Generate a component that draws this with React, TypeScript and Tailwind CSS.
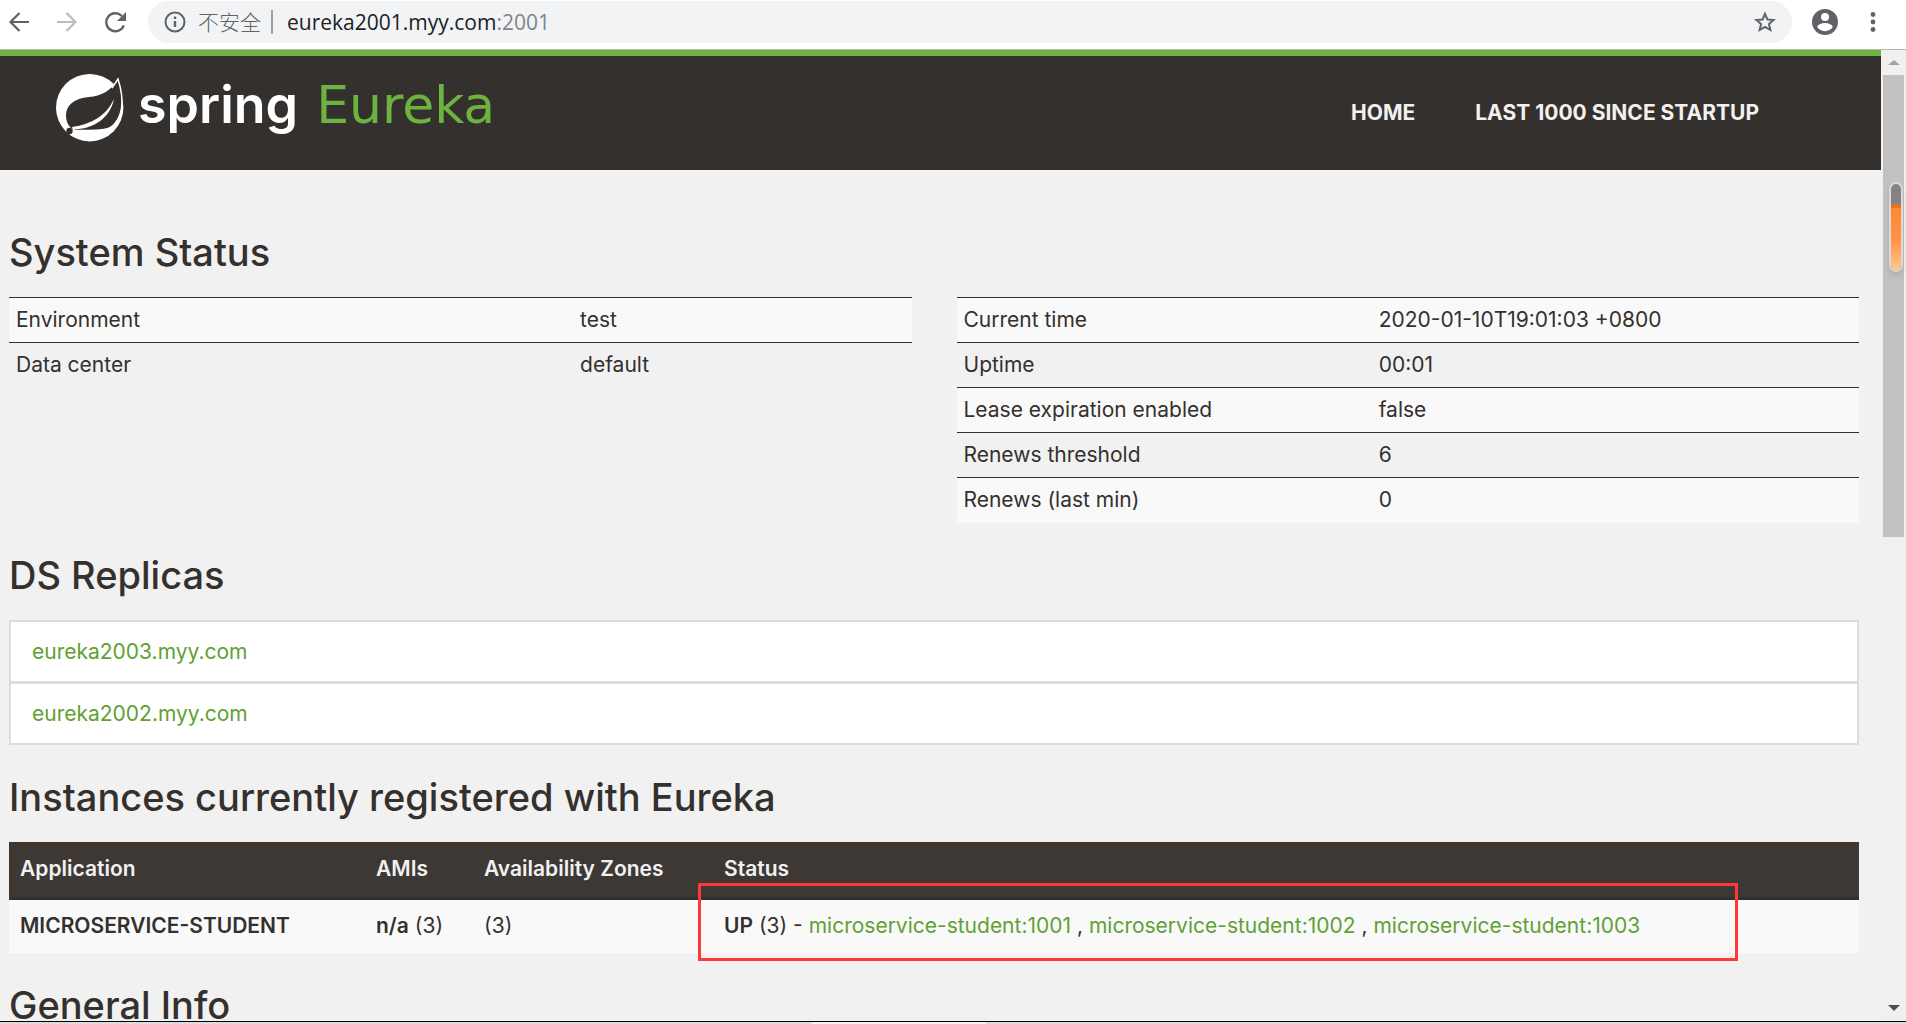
import React from "react";

const heading = "mb-[25px] text-[38px] leading-10 font-medium text-[#34302d]";

function StatusTable({ rows, first }: { rows: string[][]; first: string }) {
  return (
    <table className="w-full table-fixed border-collapse self-start">
      <colgroup>
        <col className={first} />
        <col />
      </colgroup>
      <tbody>
        {rows.map(([k, v]) => (
          <tr key={k} className="h-[45px] border-t border-[#34302d] odd:bg-[#f9f9f9]">
            <td className="px-[7px]">{k}</td>
            <td className="px-[7px]">{v}</td>
          </tr>
        ))}
      </tbody>
    </table>
  );
}

function Toolbar() {
  return (
    <div className="flex h-[50px] shrink-0 items-start border-b border-[#b6b4b6] bg-white text-[#5f6368]">
      <div className="flex h-[43px] items-center gap-6 pl-2">
        <button aria-label="Back"><svg width="22" height="22" viewBox="0 0 22 22" fill="none" stroke="currentColor" strokeWidth="2.2"><path d="M21 11H3M11.500 2L2.500 11l9 9" /></svg></button>
        <button aria-label="Forward" className="pl-0.5 text-[#babcbe]"><svg width="22" height="22" viewBox="0 0 22 22" fill="none" stroke="currentColor" strokeWidth="2.2"><path d="M1 11h18M10.500 2l9 9-9 9" /></svg></button>
        <button aria-label="Reload" className="pl-0.5"><svg width="24" height="22" viewBox="0 0 24 22"><path d="M19.800 14.300A9 9 0 1 1 17.800 5" fill="none" stroke="currentColor" strokeWidth="2.4" /><path d="M22 1v9h-9z" fill="currentColor" /></svg></button>
      </div>
      <div className="mt-px ml-5 flex h-[42px] flex-1 items-center rounded-full bg-[#f1f3f4] pr-4 pl-4 font-['Open_Sans','Noto_Sans_CJK_SC',sans-serif] text-[21px]">
        <svg width="22" height="22" viewBox="0 0 22 22" fill="none" stroke="currentColor" strokeWidth="2"><circle cx="11" cy="11" r="9.500" /><path d="M11 10v6M11 5.500V8" strokeWidth="2.400" /></svg>
        <span className="ml-3 border-r-2 border-[#9aa0a6] pr-2.5 leading-6 font-light">不安全</span>
        <a href="#" className="ml-3.5 flex-1 text-[#202124]">eureka2001.myy.com<span className="text-[#80868b]">:2001</span></a>
        <button aria-label="Bookmark"><svg width="22" height="22" viewBox="0 0 22 22" fill="none" stroke="currentColor" strokeWidth="2"><path d="M11 2.800l2.400 5.700 6.200.500-4.700 4 1.500 6L11 15.800 5.600 19l1.500-6-4.700-4 6.200-.500z" /></svg></button>
      </div>
      <div className="flex h-[43px] items-center gap-8 pr-[30px] pl-5">
        <button aria-label="Profile"><svg width="26" height="26" viewBox="0 0 26 26"><circle cx="13" cy="13" r="13" fill="currentColor" /><circle cx="13" cy="8" r="4" fill="white" /><path d="M5.200 18c1-3 5-4 7.800-4s6.800 1 7.800 4a9.300 9.300 0 0 1-15.600 0z" fill="white" /></svg></button>
        <button aria-label="Menu"><svg width="6" height="22" viewBox="0 0 6 22" fill="currentColor"><circle cx="3" cy="3.500" r="2.400" /><circle cx="3" cy="11" r="2.400" /><circle cx="3" cy="18.500" r="2.400" /></svg></button>
      </div>
    </div>
  );
}

function Header() {
  return (
    <header className="flex h-[120px] items-start justify-between border-t-[6px] border-[#6db33f] bg-[#34302d] pr-[122px] pl-14">
      <a href="#" className="flex items-start pt-[18px] text-[52px] leading-[62px]">
        <svg width="70" height="70" viewBox="0 0 70 70">
          <circle cx="33.700" cy="33.700" r="33.700" fill="#fff" />
          <path d="M62 5C55 17 45 22 33 23C18 24 10 32 10 41C10 47 12 51 15 54L20 56C32 56 45 58 54 53C67 45 69 27 62 5Z" fill="#34302d" />
          <path d="M56 14L62 5C69 27 67 45 54 54C45 58 32 56 20 56.500" fill="none" stroke="#fff" strokeWidth="1.500" />
          <path d="M58 25C54 44 38 55 17 55.500L16 53C36 50 50 42 58 25z" fill="#fff" />
          <circle cx="13.500" cy="57" r="3.200" fill="#34302d" />
        </svg>
        <span className="flex items-baseline gap-[18px] pl-3">
          <span className="font-semibold text-white">spring</span>
          <span className="font-['DejaVu_Sans',sans-serif] text-[#6db33f]">Eureka</span>
        </span>
      </a>
      <nav className="mt-11 flex gap-[60px] text-[21px] leading-[26px] font-bold text-[#f1f1f1]">
        <a href="#">HOME</a>
        <a href="#">LAST 1000 SINCE STARTUP</a>
      </nav>
    </header>
  );
}

function Scrollbar() {
  return (
    <div className="relative flex w-[25px] shrink-0 flex-col items-center bg-[#f0f0f0]">
      <svg className="my-2.5 h-[5px] w-3" viewBox="0 0 12 5"><path d="M6 0l6 5H0z" fill="#a3a3a3" /></svg>
      <div className="h-[462px] w-[21px] bg-[#c1c1c1]" />
      <svg className="mt-auto mb-2.5 h-1.5 w-3" viewBox="0 0 12 6"><path d="M0 0h12L6 6z" fill="#505050" /></svg>
      <div className="absolute top-[132px] right-[3px] h-[90px] w-[14px] overflow-hidden rounded-full border-2 border-[#dadada] bg-[#838383] shadow-md">
        <div className="mt-5 h-[66px] border-t-4 border-[#e8731d] bg-linear-to-b from-[#ff8833] via-[#ff9142] to-[#ffc98c]" />
      </div>
    </div>
  );
}

export default function App() {
  return (
    <div className="flex h-screen flex-col overflow-hidden bg-[#f1f1f1] font-['Inter',sans-serif] text-[21px] leading-[30px] text-[#34302d]">
      <Toolbar />
      <div className="flex min-h-0 flex-1">
        <div className="min-w-0 flex-1 overflow-hidden">
          <Header />
          <main className="pt-[62px] pr-[22px] pl-[9px]">
            <h1 className={heading}>System Status</h1>
            <div className="grid grid-cols-2 gap-[45px]">
              <StatusTable first="w-5/8" rows={[["Environment", "test"], ["Data center", "default"]]} />
              <StatusTable first="w-[46%]" rows={[["Current time", "2020-01-10T19:01:03 +0800"], ["Uptime", "00:01"], ["Lease expiration enabled", "false"], ["Renews threshold", "6"], ["Renews (last min)", "0"]]} />
            </div>
            <h1 className={`${heading} mt-8`}>DS Replicas</h1>
            <ul className="divide-y-3 divide-[#dddddd] border-2 border-[#dddddd] bg-white leading-[31px]">
              {["eureka2003.myy.com", "eureka2002.myy.com"].map((h) => (
                <li key={h} className="px-[21px] py-3.5"><a href="#" className="text-[#5fa134]">{h}</a></li>
              ))}
            </ul>
            <h1 className={`${heading} mt-8`}>Instances currently registered with Eureka</h1>
            <div className="relative">
              <table className="w-full table-fixed border-collapse text-left">
                <thead className="border-b-3 border-[#34302d] bg-[#3d3834] text-[#f1f1f1]">
                  <tr className="h-[57px]">
                    <th className="w-[356px] px-[11px] font-semibold">Application</th>
                    <th className="w-[108px] px-[11px] font-semibold">AMIs</th>
                    <th className="w-[240px] px-[11px] font-semibold">Availability Zones</th>
                    <th className="px-[11px] font-semibold">Status</th>
                  </tr>
                </thead>
                <tbody>
                  <tr className="h-[54px] bg-[#f9f9f9]">
                    <td className="px-[11px] font-semibold">MICROSERVICE-STUDENT</td>
                    <td className="pl-[11px] whitespace-nowrap"><b className="font-semibold">n/a</b> (3)</td>
                    <td className="px-[11px]">(3)</td>
                    <td className="px-[11px] whitespace-nowrap">
                      <b className="font-semibold">UP</b> (3) - <a href="#" className="text-[#5fa134]">microservice-student:1001</a> , <a href="#" className="text-[#5fa134]">microservice-student:1002</a> , <a href="#" className="text-[#5fa134]">microservice-student:1003</a>
                    </td>
                  </tr>
                </tbody>
              </table>
              <div className="pointer-events-none absolute top-[41px] right-[121px] -bottom-2 left-[689px] border-3 border-[#fe3838]" />
            </div>
            <h1 className={`${heading} mt-8`}>General Info</h1>
          </main>
        </div>
        <Scrollbar />
      </div>
      <div className="flex h-[3px] shrink-0 border-t border-black bg-[#dcdcdc] pl-[812px]"><div className="h-full w-[174px] bg-[#f4f4f4]" /></div>
    </div>
  );
}
